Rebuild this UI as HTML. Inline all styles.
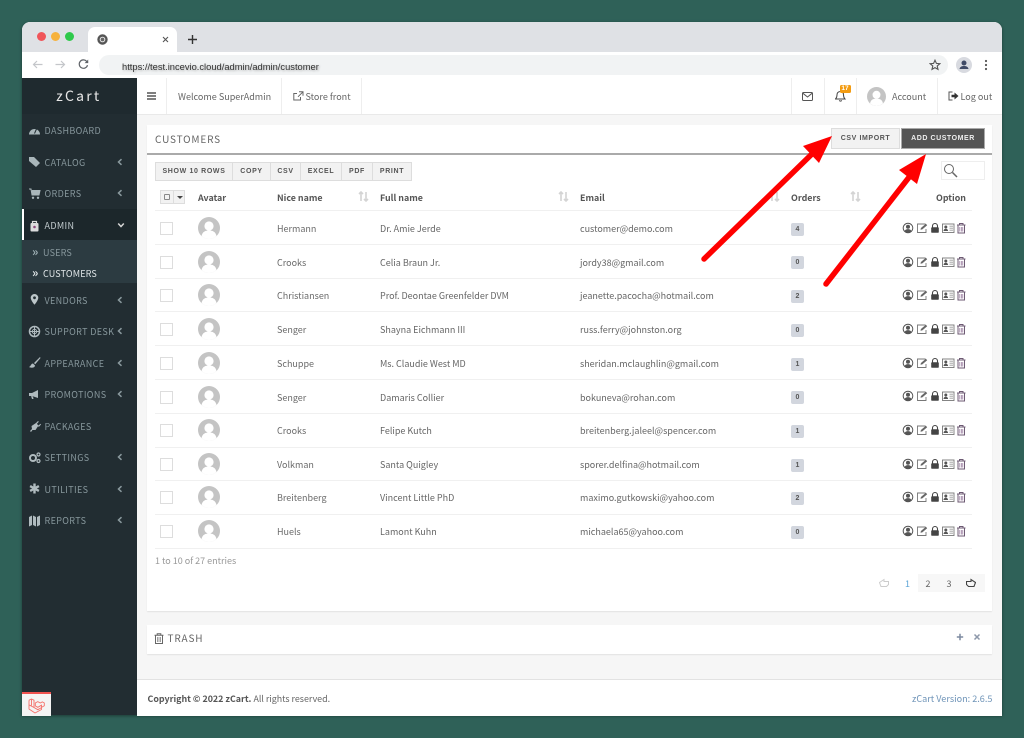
<!DOCTYPE html>
<html style="background:#2f6158"><head><meta charset="utf-8"><style>
*{box-sizing:border-box}
html,body{margin:0;padding:0;width:1024px;height:738px;overflow:hidden}
body{font-family:"Noto Sans CJK SC","Liberation Sans",sans-serif;font-size:9px;color:#666;filter:blur(.3px);position:relative}
.a{position:absolute;white-space:nowrap}
#win{position:absolute;left:22px;top:22px;width:980px;height:693px;background:#f6f6f6;border-radius:8px 8px 0 0;overflow:hidden;box-shadow:0 1px 3px rgba(0,0,0,.4)}
.s{color:#87979c;font-size:9px;letter-spacing:.35px;left:44.5px;line-height:15px}
.ch{left:116px;width:8px;height:8px}
.ic{left:28px;width:13px;height:13px}
.r{left:277px;font-size:9px;line-height:15px;color:#6b6b6b}
.f{left:380px;font-size:9px;line-height:15px;color:#666}
.e{left:580px;font-size:9px;line-height:15px;color:#666}
.n{font-size:9.05px;line-height:14px;color:#666}
.cb{left:160px;width:13px;height:13px;background:#fff;border:1px solid #ddd}
.av{left:198px;width:22px;height:22px}
.bd{left:791px;width:13px;height:13px;background:#d2d6de;border-radius:2px;font:700 7px/13px "Liberation Sans",sans-serif;color:#555;text-align:center}
.op{left:902px;width:65px;height:12px}
.hl{left:155px;width:817px;height:1px;background:#f0f0f0}
.th{top:190px;font-size:8.9px;font-weight:700;color:#555;line-height:15px}
.b{top:162px;height:19px;background:#f2f2f2;border:1px solid #ddd;border-left:0;font:700 7px/17px "Liberation Sans",sans-serif;letter-spacing:.65px;color:#555;text-align:center}
.sort{top:191px;width:11px;height:11px}
</style></head><body>
<svg width="0" height="0" style="position:absolute"><defs>
<symbol id="av" viewBox="0 0 22 22"><circle cx="11" cy="11" r="11" fill="#c4c4c4"/><circle cx="11" cy="9" r="4.600" fill="#fff"/><path d="M3.500 19c1-4.500 4-5.500 7.500-5.500s6.500 1 7.500 5.500a11 11 0 0 1-15 0z" fill="#fff"/></symbol>
<symbol id="ch" viewBox="0 0 8 8"><path d="M5.500 1.200 2.500 4l3 2.800" fill="none" stroke="#8b9a9f" stroke-width="1.500"/></symbol>
<symbol id="sort" viewBox="0 0 11 11"><path d="M3 10V1M1 3l2-2 2 2M8 1v9M6 8l2 2 2-2" fill="none" stroke="#d4d4d4" stroke-width="1.600"/></symbol>
<symbol id="op" viewBox="0 0 65 12">
<circle cx="6" cy="6" r="4.800" fill="none" stroke="#555" stroke-width="1"/><circle cx="6" cy="4.800" r="2" fill="#555"/><path d="M2.500 9.500c.6-2 2-2.400 3.500-2.400s2.900.4 3.500 2.400a5 5 0 0 1-7 0z" fill="#555"/>
<path d="M23.500 2h-8v8.500h8.500V7" fill="none" stroke="#777" stroke-width=".9"/><path d="M18.500 7.800l.4-1.800 5-4.200 1.300 1.400-4.900 4.200z" fill="#666"/>
<path d="M30.500 5.500V4a2.500 2.500 0 0 1 5 0v1.500" fill="none" stroke="#444" stroke-width="1.100"/><rect x="29.200" y="5.300" width="7.600" height="5.500" rx=".8" fill="#444"/>
<rect x="40.500" y="2" width="11.500" height="8.500" fill="none" stroke="#777" stroke-width=".9"/><circle cx="43.800" cy="5" r="1.500" fill="#555"/><path d="M41.500 9c.3-1.800 1.200-2.300 2.300-2.300s2 .5 2.300 2.300z" fill="#555"/><path d="M47.500 4.200h3.500M47.500 6.200h3.500M47.500 8.200h3.500" stroke="#999" stroke-width=".8"/>
<path d="M55 3h8.500M57.500 3V1.500H61V3M56 3.500v7.500h6.500V3.500" fill="none" stroke="#6d5a73" stroke-width="1"/><path d="M57.800 5v4.500M59.300 5v4.500M60.800 5v4.500" stroke="#8d6b93" stroke-width=".7"/>
</symbol>
</defs></svg>

<div id="win"></div>
<!-- browser chrome -->
<div class="a" style="left:22px;top:22px;width:980px;height:30px;background:#dfe1e5;border-radius:8px 8px 0 0"></div>
<div class="a" style="left:37px;top:32px;width:9px;height:9px;border-radius:50%;background:#f0555a"></div>
<div class="a" style="left:51px;top:32px;width:9px;height:9px;border-radius:50%;background:#f6b23d"></div>
<div class="a" style="left:65px;top:32px;width:9px;height:9px;border-radius:50%;background:#2fc94b"></div>
<div class="a" style="left:88px;top:27px;width:89px;height:25px;background:#fff;border-radius:7px 7px 0 0"></div>
<svg class="a" style="left:97px;top:34px" width="11" height="11" viewBox="0 0 11 11"><circle cx="5.500" cy="5.500" r="5.200" fill="#555"/><circle cx="5.500" cy="5.500" r="2.800" fill="#f2f2f2"/><circle cx="5.500" cy="5.500" r="1.900" fill="#666"/></svg>
<svg class="a" style="left:161.500px;top:36px" width="7" height="7" viewBox="0 0 7 7"><path d="M1 1l5 5M6 1L1 6" stroke="#555" stroke-width="1.100"/></svg>
<svg class="a" style="left:187px;top:34px" width="11" height="11" viewBox="0 0 11 11"><path d="M5.500 1v9M1 5.500h9" stroke="#333" stroke-width="1.400"/></svg>
<div class="a" style="left:22px;top:52px;width:980px;height:26px;background:#fff"></div>
<svg class="a" style="left:31px;top:58px" width="13" height="13" viewBox="0 0 13 13"><path d="M11.500 6.500h-9M6 3 2.500 6.500 6 10" fill="none" stroke="#c4c6ca" stroke-width="1.200"/></svg>
<svg class="a" style="left:54px;top:58px" width="13" height="13" viewBox="0 0 13 13"><path d="M1.500 6.500h9M7 3l3.500 3.500L7 10" fill="none" stroke="#c4c6ca" stroke-width="1.200"/></svg>
<svg class="a" style="left:77px;top:58px" width="13" height="13" viewBox="0 0 13 13"><path d="M10.500 7.200A4.200 4.200 0 1 1 9.500 3.200L11 4.500" fill="none" stroke="#5f6368" stroke-width="1.200"/><path d="M11.200 1.500v3.600H7.600z" fill="#5f6368"/></svg>
<div class="a" style="left:99px;top:55px;width:849px;height:20px;background:#f1f3f4;border-radius:10px"></div>
<div class="a" style="left:122px;top:59.500px;font:9.350px/14px 'Liberation Sans',sans-serif;color:#333;text-shadow:1px 1px 2px rgba(0,0,0,.3)">https://test.incevio.cloud/admin/admin/customer</div>
<svg class="a" style="left:929px;top:59px" width="12" height="12" viewBox="0 0 12 12"><path d="M6 1.200l1.400 3.200 3.500.3-2.700 2.300.8 3.400L6 8.600l-3 1.800.8-3.400L1.100 4.700l3.500-.3z" fill="none" stroke="#555" stroke-width="1.100"/></svg>
<svg class="a" style="left:956px;top:57px" width="16" height="16" viewBox="0 0 16 16"><circle cx="8" cy="8" r="8" fill="#d8dae0"/><circle cx="8" cy="6" r="2.500" fill="#3f4a66"/><path d="M3.500 12c.5-2.500 2.500-3 4.500-3s4 .5 4.500 3z" fill="#3f4a66"/></svg>
<svg class="a" style="left:984px;top:59px" width="4" height="12" viewBox="0 0 4 12"><circle cx="2" cy="2" r="1.100" fill="#555"/><circle cx="2" cy="6" r="1.100" fill="#555"/><circle cx="2" cy="10" r="1.100" fill="#555"/></svg>

<!-- sidebar -->
<div class="a" style="left:22px;top:78px;width:114.500px;height:637px;background:#222d32"></div>
<div class="a" style="left:22px;top:78px;width:114.500px;height:36px;text-align:center;color:#e8e8e8;font-size:14px;line-height:36px;letter-spacing:2.200px;padding-right:1px;background:#1f2a2f">zCart</div>
<div class="a" style="left:22px;top:209px;width:114.500px;height:31px;background:#1c272b;border-left:2px solid #fff"></div>
<div class="a" style="left:22px;top:240px;width:114.500px;height:43px;background:#2c3b41"></div>

<svg class="a ic" style="top:124px" viewBox="0 0 13 13"><path d="M1 10.500a5.500 5.500 0 1 1 11 0z" fill="#a9b6ba"/><path d="M6.500 9.500 8.500 5" stroke="#222d32" stroke-width="1"/></svg>
<div class="a s" style="top:123px">DASHBOARD</div>
<svg class="a ic" style="top:155px" viewBox="0 0 13 13"><path d="M1 2h5l6 6-4 4-7-6z" fill="#a9b6ba"/></svg>
<div class="a s" style="top:154.500px">CATALOG</div><svg class="a ch" style="top:157.500px"><use href="#ch"/></svg>
<svg class="a ic" style="top:187px" viewBox="0 0 13 13"><path d="M1 2h2l1 6h7l1-4.500H4" fill="#a9b6ba" stroke="#a9b6ba"/><circle cx="5" cy="10.800" r="1.200" fill="#a9b6ba"/><circle cx="10" cy="10.800" r="1.200" fill="#a9b6ba"/></svg>
<div class="a s" style="top:186px">ORDERS</div><svg class="a ch" style="top:189px"><use href="#ch"/></svg>
<svg class="a ic" style="top:218.500px" viewBox="0 0 13 13"><path d="M4.500 4V2.500h4V4" fill="none" stroke="#dcdcdc" stroke-width="1.200"/><rect x="2.500" y="4" width="8" height="8.500" rx="1" fill="#dcdcdc"/><circle cx="6.500" cy="8" r="1.300" fill="#8c4a7c"/></svg>
<div class="a s" style="top:217.500px;color:#c5ced1">ADMIN</div>
<svg class="a" style="left:117px;top:221px" width="8" height="8" viewBox="0 0 8 8"><path d="M1.200 2.500 4 5.500l2.800-3" fill="none" stroke="#d5d5d5" stroke-width="1.500"/></svg>
<div class="a" style="left:32px;top:244.500px;font-size:12px;font-weight:700;line-height:14px;color:#9fb0b5">»</div>
<div class="a" style="left:43px;top:244.500px;font-size:9px;line-height:15px;letter-spacing:.2px;color:#87979c">USERS</div>
<div class="a" style="left:32px;top:266px;font-size:12px;font-weight:700;line-height:14px;color:#dfe5e7">»</div>
<div class="a" style="left:43px;top:266px;font-size:9px;line-height:15px;letter-spacing:.15px;color:#dfe5e7">CUSTOMERS</div>
<svg class="a ic" style="top:293px" viewBox="0 0 13 13"><path d="M6.500 1a3.800 3.800 0 0 1 3.800 3.800c0 2.500-3.800 7-3.800 7s-3.800-4.500-3.800-7A3.800 3.800 0 0 1 6.500 1z" fill="#bcc6c9"/><circle cx="6.500" cy="4.800" r="1.400" fill="#222d32"/></svg>
<div class="a s" style="top:292.500px">VENDORS</div><svg class="a ch" style="top:295.500px"><use href="#ch"/></svg>
<svg class="a ic" style="top:324.500px" viewBox="0 0 13 13"><circle cx="6.500" cy="6.500" r="5" fill="none" stroke="#b0bbbf" stroke-width="1.500"/><circle cx="6.500" cy="6.500" r="2.200" fill="none" stroke="#b0bbbf"/><path d="M6.500 1v11M1 6.500h11" stroke="#b0bbbf"/></svg>
<div class="a s" style="top:324px">SUPPORT DESK</div><svg class="a ch" style="top:327px"><use href="#ch"/></svg>
<svg class="a ic" style="top:356px" viewBox="0 0 13 13"><path d="M12 1 6 7l1.200 1.200L12.500 2zM5 7.500c-2 0-2 2.500-4 3.500 3 1.500 6 .5 6-1.500z" fill="#b0bbbf"/></svg>
<div class="a s" style="top:355.500px">APPEARANCE</div><svg class="a ch" style="top:358.500px"><use href="#ch"/></svg>
<svg class="a ic" style="top:387.500px" viewBox="0 0 13 13"><path d="M1 5h3l6-3v8L4 8H1zM3 8l1 3h1.500L5 8.500" fill="#b0bbbf"/></svg>
<div class="a s" style="top:387px">PROMOTIONS</div><svg class="a ch" style="top:390px"><use href="#ch"/></svg>
<svg class="a ic" style="top:419.500px" viewBox="0 0 13 13"><path d="M2 11 4 9 3.500 6 8 3l2.500 2.500L7.500 10 4.500 10 3 12zM7.500 3.500 10 1l.8.8L8.500 4.200zM10 6l2.400-2.300.6.800L10.800 7z" fill="#b0bbbf"/></svg>
<div class="a s" style="top:418.500px">PACKAGES</div>
<svg class="a ic" style="top:451px" viewBox="0 0 13 13"><circle cx="5" cy="7" r="3" fill="none" stroke="#b0bbbf" stroke-width="2"/><circle cx="10.500" cy="3.500" r="1.500" fill="none" stroke="#b0bbbf" stroke-width="1.200"/><circle cx="10.500" cy="10" r="1.500" fill="none" stroke="#b0bbbf" stroke-width="1.200"/></svg>
<div class="a s" style="top:450px">SETTINGS</div><svg class="a ch" style="top:453px"><use href="#ch"/></svg>
<svg class="a ic" style="top:482px" viewBox="0 0 13 13"><path d="M5.300 1.500h2.400v3l2.600-1.500 1.200 2.100L8.900 6.500l2.600 1.400-1.200 2.100-2.600-1.500v3H5.300v-3L2.700 10 1.500 7.900l2.600-1.400L1.500 5.100 2.700 3l2.600 1.500z" fill="#b0bbbf"/></svg>
<div class="a s" style="top:481.500px">UTILITIES</div><svg class="a ch" style="top:484.500px"><use href="#ch"/></svg>
<svg class="a ic" style="top:513.500px" viewBox="0 0 13 13"><path d="M1 3l3-1.500V11l-3 1.500zM5 1.500 8 3v9.500L5 11zM9 3l3-1.500V11l-3 1.500z" fill="#b0bbbf"/></svg>
<div class="a s" style="top:513px">REPORTS</div><svg class="a ch" style="top:516px"><use href="#ch"/></svg>

<div class="a" style="left:22px;top:692px;width:28.500px;height:24px;background:#f4f4f4;border-top:2px solid #ef5350"></div>
<svg class="a" style="left:27.500px;top:697.500px" width="17" height="16" viewBox="0 0 17 16"><path d="M1 2.200 3.500 1 6 2.200V9.500l3.800 2.200 3.700-2.100V7.200L9.800 9.300 7.300 7.900V5l2.500-1.400L12.300 5l2-1.100 2 1.100v2.700l-2.800 1.700M6 9.500 1 6.800V2.200M1 6.800V11l6 4 6.500-3.500V9.600M3.500 1v6.500" fill="none" stroke="#f4706a" stroke-width=".9"/></svg>

<!-- navbar -->
<div class="a" style="left:136.500px;top:78px;width:865.500px;height:37px;background:#fff;border-bottom:1px solid #e9e9e9"></div>
<svg class="a" style="left:147px;top:92px" width="9" height="8" viewBox="0 0 9 8"><path d="M0 1h9M0 4h9M0 7h9" stroke="#333" stroke-width="1.300"/></svg>
<div class="a" style="left:166px;top:78px;width:1px;height:36px;background:#eee"></div>
<div class="a n" style="left:178px;top:89.500px">Welcome SuperAdmin</div>
<div class="a" style="left:281px;top:78px;width:1px;height:36px;background:#eee"></div>
<svg class="a" style="left:293px;top:91px" width="11" height="10" viewBox="0 0 11 10"><path d="M7.500 6v3H.8V2.500H4M6 .8h4v4M10 .8 5 5.800" fill="none" stroke="#666" stroke-width="1"/></svg>
<div class="a n" style="left:305.500px;top:89.500px">Store front</div>
<div class="a" style="left:360.500px;top:78px;width:1px;height:36px;background:#eee"></div>
<div class="a" style="left:791px;top:78px;width:1px;height:36px;background:#eee"></div>
<svg class="a" style="left:802px;top:92px" width="11" height="9" viewBox="0 0 11 9"><rect x=".5" y=".5" width="10" height="8" rx="1" fill="none" stroke="#555"/><path d="M.8 1.200 5.500 5l4.700-3.800" fill="none" stroke="#555"/></svg>
<div class="a" style="left:824px;top:78px;width:1px;height:36px;background:#eee"></div>
<svg class="a" style="left:835px;top:90px" width="11" height="12" viewBox="0 0 11 12"><path d="M5.500 1.500c2.200 0 3 1.700 3 3.500 0 2 .6 3 1.500 4H.5c.9-1 1.500-2 1.500-4 0-1.800.8-3.500 3.500-3.500zM4.300 10.300a1.300 1.300 0 0 0 2.400 0" fill="none" stroke="#444"/></svg>
<div class="a" style="left:839.500px;top:85px;width:11px;height:8px;background:#f39c12;border-radius:1.500px;font:700 6.500px/8px 'Liberation Sans',sans-serif;color:#fff;text-align:center">17</div>
<div class="a" style="left:856px;top:78px;width:1px;height:36px;background:#eee"></div>
<svg class="a" style="left:867px;top:87px" width="19" height="19"><use href="#av"/></svg>
<div class="a n" style="left:892px;top:89.500px">Account</div>
<div class="a" style="left:937px;top:78px;width:1px;height:36px;background:#eee"></div>
<svg class="a" style="left:948px;top:91px" width="11" height="10" viewBox="0 0 11 10"><path d="M4.500 1H1v8h3.500" fill="none" stroke="#555"/><path d="M3.500 3.800h3V1.500L10.500 5l-4 3.500V6.200h-3z" fill="#333"/></svg>
<div class="a n" style="left:960.500px;top:89.500px">Log out</div>

<!-- panel -->
<div class="a" style="left:147px;top:125px;width:845px;height:486px;background:#fff;box-shadow:0 1px 1px rgba(0,0,0,.08)"></div>
<div class="a" style="left:155px;top:131px;font-size:10px;line-height:16px;letter-spacing:.84px;color:#666">CUSTOMERS</div>
<div class="a" style="left:147px;top:153px;width:845px;height:2px;background:#aaa"></div>
<div class="a" style="left:831px;top:128px;width:69px;height:21px;background:#f2f2f2;border:1px solid #ddd;font:700 7px/19px 'Liberation Sans',sans-serif;letter-spacing:.6px;color:#555;text-align:center">CSV IMPORT</div>
<div class="a" style="left:901px;top:128px;width:84px;height:21px;background:#555;border:1px solid #aaa;font:700 7px/19px 'Liberation Sans',sans-serif;letter-spacing:.55px;color:#eee;text-align:center">ADD CUSTOMER</div>

<div class="a b" style="left:155px;width:78px;border-left:1px solid #ddd">SHOW 10 ROWS</div>
<div class="a b" style="left:233px;width:38px">COPY</div>
<div class="a b" style="left:271px;width:30px">CSV</div>
<div class="a b" style="left:301px;width:41px">EXCEL</div>
<div class="a b" style="left:342px;width:31px">PDF</div>
<div class="a b" style="left:373px;width:39px">PRINT</div>
<div class="a" style="left:941px;top:161px;width:44px;height:19px;border:1px solid #eee;background:#fff"></div>
<svg class="a" style="left:943px;top:163px" width="15" height="15" viewBox="0 0 15 15"><circle cx="6" cy="6" r="4.500" fill="none" stroke="#666" stroke-width="1"/><path d="M9.500 9.500 14 14" stroke="#666" stroke-width="1.500"/></svg>

<div class="a" style="left:160px;top:190px;width:25px;height:14px;background:#f2f2f2;border:1px solid #ddd"></div>
<div class="a" style="left:173px;top:190px;width:1px;height:14px;background:#ddd"></div>
<div class="a" style="left:164px;top:194px;width:6px;height:6px;border:1px solid #888;border-radius:1px"></div>
<div class="a" style="left:177px;top:196px;border:3px solid transparent;border-top-color:#444;border-bottom:0"></div>
<div class="a th" style="left:198px">Avatar</div>
<div class="a th" style="left:277px">Nice name</div><svg class="a sort" style="left:358px"><use href="#sort"/></svg>
<div class="a th" style="left:380px">Full name</div><svg class="a sort" style="left:558px"><use href="#sort"/></svg>
<div class="a th" style="left:580px">Email</div><svg class="a sort" style="left:769px"><use href="#sort"/></svg>
<div class="a th" style="left:791px">Orders</div><svg class="a sort" style="left:850px"><use href="#sort"/></svg>
<div class="a th" style="left:936px">Option</div>

<div class="a hl" style="top:210px"></div>
<div class="a cb" style="top:222px"></div><svg class="a av" style="top:217px"><use href="#av"/></svg><div class="a r" style="top:221px">Hermann</div><div class="a f" style="top:221px">Dr. Amie Jerde</div><div class="a e" style="top:221px">customer@demo.com</div><div class="a bd" style="top:222.500px">4</div><svg class="a op" style="top:222px"><use href="#op"/></svg>
<div class="a hl" style="top:244px"></div>
<div class="a cb" style="top:255.500px"></div><svg class="a av" style="top:250.500px"><use href="#av"/></svg><div class="a r" style="top:254.500px">Crooks</div><div class="a f" style="top:254.500px">Celia Braun Jr.</div><div class="a e" style="top:254.500px">jordy38@gmail.com</div><div class="a bd" style="top:256px">0</div><svg class="a op" style="top:255.500px"><use href="#op"/></svg>
<div class="a hl" style="top:278px"></div>
<div class="a cb" style="top:289px"></div><svg class="a av" style="top:284px"><use href="#av"/></svg><div class="a r" style="top:288px">Christiansen</div><div class="a f" style="top:288px">Prof. Deontae Greenfelder DVM</div><div class="a e" style="top:288px">jeanette.pacocha@hotmail.com</div><div class="a bd" style="top:290px">2</div><svg class="a op" style="top:289px"><use href="#op"/></svg>
<div class="a hl" style="top:311px"></div>
<div class="a cb" style="top:323px"></div><svg class="a av" style="top:318px"><use href="#av"/></svg><div class="a r" style="top:322px">Senger</div><div class="a f" style="top:322px">Shayna Eichmann III</div><div class="a e" style="top:322px">russ.ferry@johnston.org</div><div class="a bd" style="top:324px">0</div><svg class="a op" style="top:323px"><use href="#op"/></svg>
<div class="a hl" style="top:345px"></div>
<div class="a cb" style="top:356.500px"></div><svg class="a av" style="top:352px"><use href="#av"/></svg><div class="a r" style="top:356px">Schuppe</div><div class="a f" style="top:356px">Ms. Claudie West MD</div><div class="a e" style="top:356px">sheridan.mclaughlin@gmail.com</div><div class="a bd" style="top:357.500px">1</div><svg class="a op" style="top:356.500px"><use href="#op"/></svg>
<div class="a hl" style="top:379px"></div>
<div class="a cb" style="top:390.500px"></div><svg class="a av" style="top:385.500px"><use href="#av"/></svg><div class="a r" style="top:389.500px">Senger</div><div class="a f" style="top:389.500px">Damaris Collier</div><div class="a e" style="top:389.500px">bokuneva@rohan.com</div><div class="a bd" style="top:391px">0</div><svg class="a op" style="top:390px"><use href="#op"/></svg>
<div class="a hl" style="top:412.500px"></div>
<div class="a cb" style="top:424px"></div><svg class="a av" style="top:419px"><use href="#av"/></svg><div class="a r" style="top:423px">Crooks</div><div class="a f" style="top:423px">Felipe Kutch</div><div class="a e" style="top:423px">breitenberg.jaleel@spencer.com</div><div class="a bd" style="top:425px">1</div><svg class="a op" style="top:424px"><use href="#op"/></svg>
<div class="a hl" style="top:446.500px"></div>
<div class="a cb" style="top:458px"></div><svg class="a av" style="top:453px"><use href="#av"/></svg><div class="a r" style="top:457px">Volkman</div><div class="a f" style="top:457px">Santa Quigley</div><div class="a e" style="top:457px">sporer.delfina@hotmail.com</div><div class="a bd" style="top:459px">1</div><svg class="a op" style="top:458px"><use href="#op"/></svg>
<div class="a hl" style="top:480px"></div>
<div class="a cb" style="top:491px"></div><svg class="a av" style="top:486px"><use href="#av"/></svg><div class="a r" style="top:490px">Breitenberg</div><div class="a f" style="top:490px">Vincent Little PhD</div><div class="a e" style="top:490px">maximo.gutkowski@yahoo.com</div><div class="a bd" style="top:492px">2</div><svg class="a op" style="top:491px"><use href="#op"/></svg>
<div class="a hl" style="top:514px"></div>
<div class="a cb" style="top:525px"></div><svg class="a av" style="top:520px"><use href="#av"/></svg><div class="a r" style="top:524px">Huels</div><div class="a f" style="top:524px">Lamont Kuhn</div><div class="a e" style="top:524px">michaela65@yahoo.com</div><div class="a bd" style="top:525.500px">0</div><svg class="a op" style="top:525px"><use href="#op"/></svg>
<div class="a hl" style="top:547.500px"></div>

<div class="a" style="left:155px;top:553px;font-size:9px;line-height:15px;color:#999">1 to 10 of 27 entries</div>
<div class="a" style="left:918px;top:574px;width:67px;height:18px;background:#f7f7f7"></div>
<svg class="a" style="left:879px;top:578px" width="10" height="10" viewBox="0 0 10 10"><path d="M9.500 3.500H5V1.500L.5 4.500 2 8.500h5.500l2-2z" fill="none" stroke="#ccc"/></svg>
<div class="a" style="left:905px;top:577px;font-size:9px;line-height:13px;color:#5ba4d6">1</div>
<div class="a" style="left:925.500px;top:577px;font-size:9px;line-height:13px;color:#666">2</div>
<div class="a" style="left:946.500px;top:577px;font-size:9px;line-height:13px;color:#666">3</div>
<svg class="a" style="left:966px;top:578px" width="10" height="10" viewBox="0 0 10 10"><path d="M.5 3.500H5V1.500l4.500 3L8 8.500H2.500l-2-2z" fill="none" stroke="#444" stroke-width="1.100"/></svg>

<!-- trash -->
<div class="a" style="left:147px;top:625px;width:845px;height:29px;background:#fff;box-shadow:0 1px 1px rgba(0,0,0,.08)"></div>
<svg class="a" style="left:154px;top:633px" width="10" height="11" viewBox="0 0 10 11"><path d="M.5 2.200h9M3.200 2V.7h3.600V2M1.500 2.500v8h7v-8" fill="none" stroke="#666"/><path d="M3.500 4v5M5 4v5M6.500 4v5" stroke="#777" stroke-width=".7"/></svg>
<div class="a" style="left:167.500px;top:630px;font-size:10px;line-height:16px;letter-spacing:.86px;color:#666">TRASH</div>
<svg class="a" style="left:956px;top:633px" width="8" height="8" viewBox="0 0 8 8"><path d="M4 .8v6.400M.8 4h6.400" stroke="#7d8aa0" stroke-width="1.500"/></svg>
<svg class="a" style="left:973px;top:633px" width="8" height="8" viewBox="0 0 8 8"><path d="M1.500 1.500l5 5M6.500 1.500l-5 5" stroke="#8d98aa" stroke-width="1.500"/></svg>

<!-- footer -->
<div class="a" style="left:136.500px;top:679px;width:865.500px;height:36.500px;background:#fff;border-top:1px solid #e2e2e2"></div>
<div class="a" style="left:147.500px;top:691px;font-size:8.900px;line-height:15px;color:#666"><b style="color:#555">Copyright © 2022 zCart.</b> All rights reserved.</div>
<div class="a" style="left:912px;top:691px;font-size:9.100px;line-height:15px;color:#6f94b8">zCart Version: 2.6.5</div>

<!-- arrows -->
<svg class="a" style="left:0;top:0" width="1024" height="738" viewBox="0 0 1024 738">
<path d="M704 259 814 152" stroke="#f00" stroke-width="5.500" stroke-linecap="round" fill="none"/>
<path d="M832 136 803 146 819 163z" fill="#f00"/>
<path d="M826 284 910 176" stroke="#f00" stroke-width="5.500" stroke-linecap="round" fill="none"/>
<path d="M926 154 899 170 917 184z" fill="#f00"/>
</svg>
</body></html>
